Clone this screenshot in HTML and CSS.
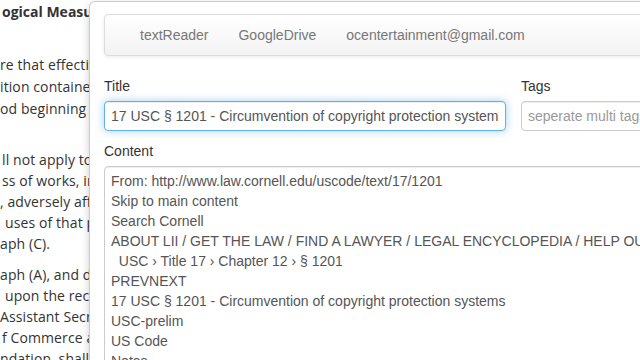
FILE: index.html
```html
<!DOCTYPE html>
<html lang="en">
<head>
<meta charset="utf-8">
<title>textReader</title>
<link rel="stylesheet" href="styles.css">
</head>
<body>
<div class="article">
  <h1 class="article-title">ogical Measures</h1>
  <p class="para para-1">
    <span class="line">re that effective</span>
    <span class="line">ition contained</span>
    <span class="line">od beginning on</span>
  </p>
  <p class="para para-2">
    <span class="line indent-s">ll not apply to</span>
    <span class="line indent-s">ss of works, in</span>
    <span class="line">, adversely affected</span>
    <span class="line indent-l">uses of that particular</span>
    <span class="line">aph (C).</span>
  </p>
  <p class="para para-3">
    <span class="line">aph (A), and during</span>
    <span class="line indent-l">upon the recommendation</span>
    <span class="line">Assistant Secretary</span>
    <span class="line indent-s">f Commerce and</span>
    <span class="line">ndation, shall</span>
  </p>
</div>

<div class="modal">
  <nav class="navbar">
    <ul class="nav">
      <li><a class="nav-link" href="#">textReader</a></li>
      <li><a class="nav-link" href="#">GoogleDrive</a></li>
      <li><a class="nav-link" href="#">ocentertainment@gmail.com</a></li>
    </ul>
  </nav>
  <form class="form">
    <div class="row">
      <div class="field">
        <label class="label" for="title">Title</label>
        <input class="input is-focused" id="title" type="text" value="17 USC § 1201 - Circumvention of copyright protection systems">
      </div>
      <div class="field">
        <label class="label" for="tags">Tags</label>
        <input class="input" id="tags" type="text" placeholder="seperate multi tags">
      </div>
    </div>
    <div class="field field-content">
      <label class="label" for="content">Content</label>
      <textarea class="textarea" id="content" wrap="off">From: http://www.law.cornell.edu/uscode/text/17/1201
Skip to main content
Search Cornell
ABOUT LII / GET THE LAW / FIND A LAWYER / LEGAL ENCYCLOPEDIA / HELP OUT
  USC › Title 17 › Chapter 12 › § 1201
PREVNEXT
17 USC § 1201 - Circumvention of copyright protection systems
USC-prelim
US Code
Notes</textarea>
    </div>
  </form>
</div>
</body>
</html>
```

FILE: styles.css
```css
html, body {
  margin: 0;
  padding: 0;
}

body {
  width: 640px;
  height: 360px;
  overflow: hidden;
  position: relative;
  background: #fff;
  font-family: "Open Sans", "DejaVu Sans", sans-serif;
  font-size: 14px;
  color: #333;
}

.article {
  padding-top: 1px;
  line-height: 21px;
  letter-spacing: 0.1px;
  white-space: nowrap;
}

.article-title {
  margin: 0 0 32px;
  padding-left: 2px;
  font-size: 14px;
  line-height: 21px;
  font-weight: 700;
  letter-spacing: 0;
}

.para {
  margin: 0;
}

.para-1 {
  line-height: 22px;
  margin-bottom: 29px;
}

.para-2 {
  margin-bottom: 10px;
}

.line {
  display: block;
}

.indent-s {
  padding-left: 2px;
}

.indent-l {
  padding-left: 5px;
}

.modal {
  position: absolute;
  left: 89px;
  top: 1px;
  width: 680px;
  height: 420px;
  box-sizing: border-box;
  padding: 12px 14px;
  background: #fff;
  border: 1px solid rgba(0, 0, 0, 0.2);
  border-radius: 6px;
  box-shadow: 0 3px 9px rgba(0, 0, 0, 0.2);
  font-family: "Liberation Sans", Arial, sans-serif;
}

.navbar {
  height: 42px;
  box-sizing: border-box;
  display: flex;
  align-items: center;
  border: 1px solid #dcdcdc;
  border-radius: 4px;
  background: linear-gradient(to bottom, #ffffff 0%, #f3f3f3 100%);
  box-shadow: inset 0 1px 0 rgba(255, 255, 255, 0.15), 0 1px 4px rgba(0, 0, 0, 0.08);
}

.nav {
  display: flex;
  margin: 0;
  padding: 0 0 0 20px;
  list-style: none;
}

.nav-link {
  display: block;
  padding: 0 15px;
  color: #777;
  text-decoration: none;
  font-size: 14px;
  line-height: 20px;
}

.form {
  margin-top: 20px;
}

.row {
  display: grid;
  grid-template-columns: 402px 1fr;
  column-gap: 15px;
}

.label {
  display: block;
  margin-bottom: 5px;
  font-size: 14px;
  line-height: 20px;
  color: #333;
}

.input {
  display: block;
  width: 100%;
  height: 30px;
  box-sizing: border-box;
  margin: 0;
  padding: 0 6px;
  border: 1px solid #ccc;
  border-radius: 4px;
  background: #fff;
  font-family: "Liberation Sans", Arial, sans-serif;
  font-size: 14px;
  color: #555;
  box-shadow: inset 0 1px 1px rgba(0, 0, 0, 0.075);
  outline: none;
}

.input::placeholder {
  color: #999;
}

.input.is-focused {
  border-color: #66afe9;
  box-shadow: inset 0 1px 1px rgba(0, 0, 0, 0.075), 0 0 8px rgba(102, 175, 233, 0.6);
}

.field-content {
  margin-top: 10px;
}

.textarea {
  display: block;
  width: 100%;
  height: 240px;
  box-sizing: border-box;
  margin: 0;
  padding: 4px 6px;
  border: 1px solid #ccc;
  border-radius: 4px;
  background: #fff;
  font-family: "Liberation Sans", Arial, sans-serif;
  font-size: 14px;
  line-height: 20px;
  color: #555;
  white-space: pre;
  overflow: hidden;
  resize: none;
  box-shadow: inset 0 1px 1px rgba(0, 0, 0, 0.075);
  outline: none;
}
```
